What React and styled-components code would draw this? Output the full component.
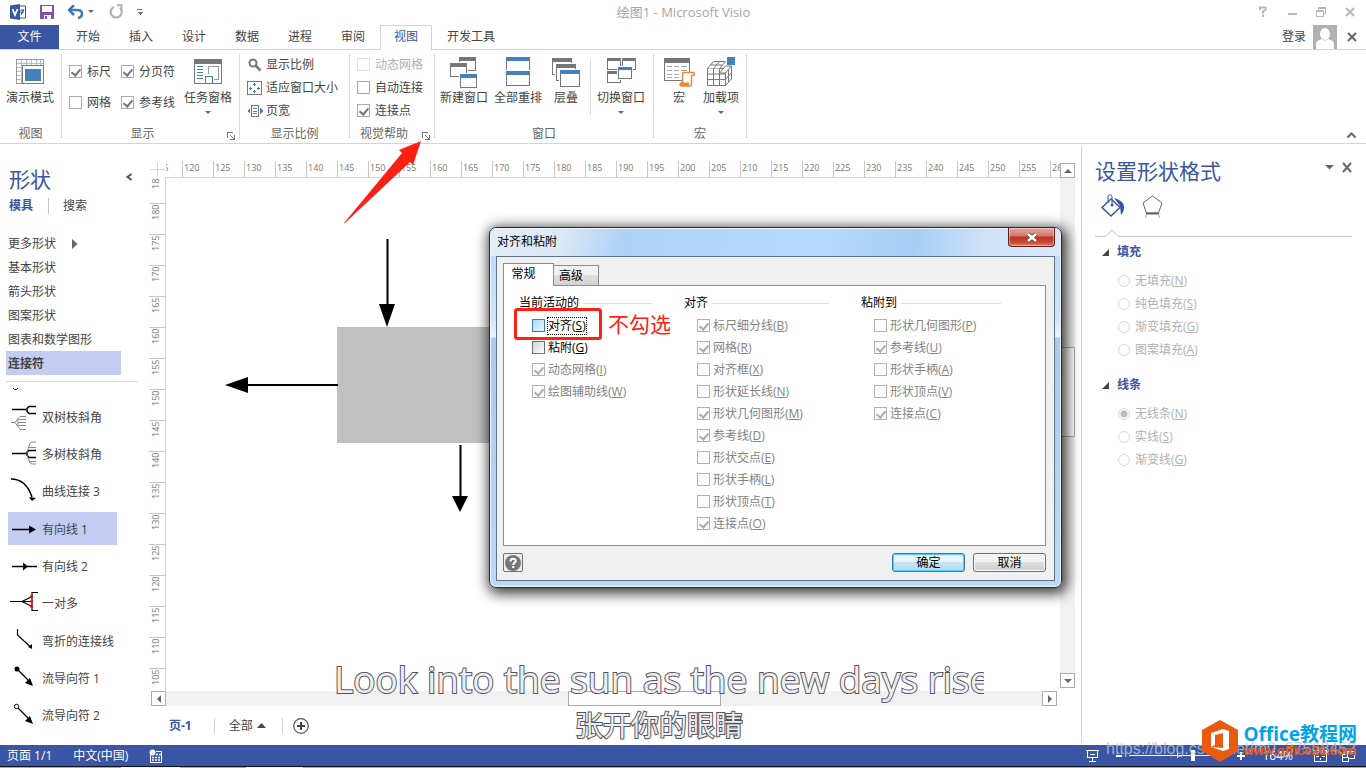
import React, { useState } from 'react';
import styled, { createGlobalStyle, css } from 'styled-components';

const GlobalStyle = createGlobalStyle`
  * {
    box-sizing: border-box;
  }
  body {
    margin: 0;
    overflow: hidden;
    background: #fff;
  }
  body, button, input {
    font-family: "Open Sans", "Noto Sans CJK SC", sans-serif;
    font-size: 12px;
    line-height: 16px;
    color: #444;
  }
  button {
    padding: 0;
    border: 0;
    background: none;
    white-space: nowrap;
  }
  svg {
    display: block;
    flex: none;
  }
`;

const Window = styled.div`
  position: relative;
  display: flex;
  flex-direction: column;
  height: 100vh;
  min-height: 640px;
  overflow: hidden;
`;

/* title bar */

const TitleBar = styled.header`
  display: grid;
  grid-template-columns: 1fr auto 1fr;
  align-items: center;
  height: 25px;
  padding: 0 8px 2px 9px;
`;

const QuickAccess = styled.div`
  display: flex;
  align-items: center;
`;

const IconButton = styled.button`
  display: flex;
  align-items: center;
  justify-content: center;
  width: ${(p) => p.$w || 16}px;
  height: ${(p) => p.$h || 16}px;
  margin-right: ${(p) => p.$gap || 0}px;
`;

const WindowTitle = styled.div`
  font-size: 13px;
  color: #a6a6a6;
  white-space: nowrap;
`;

const WindowButtons = styled.div`
  display: flex;
  justify-content: flex-end;
  gap: 13px;
`;

/* ribbon tabs */

const TabRow = styled.nav`
  display: flex;
  align-items: stretch;
  height: 25px;
  border-bottom: 1px solid #d4d4d4;
`;

const FileTab = styled.button`
  width: 59px;
  margin-right: 3px;
  color: #fff;
  background: #3955a3;
`;

const RibbonTab = styled.button`
  height: 25px;
  margin-right: 1px;
  padding: 0 13px 2px;
  border: 1px solid transparent;
  border-bottom: 0;
  ${(p) =>
    p.$active &&
    css`
      color: #3955a3;
      background: #fff;
      border-color: #d4d4d4;
    `}
`;

const Account = styled.div`
  display: flex;
  align-items: center;
  gap: 7px;
  margin-left: auto;
  padding-right: 6px;
`;

/* ribbon */

const RibbonBar = styled.div`
  display: flex;
  height: 94px;
  border-bottom: 1px solid #d4d4d4;
`;

const Group = styled.section`
  display: flex;
  flex-direction: column;
  padding-top: 3px;
`;

const GroupBody = styled.div`
  display: flex;
  flex: 1;
  gap: ${(p) => p.$gap || 0}px;
  padding: 0 ${(p) => p.$end || 0}px 0 ${(p) => p.$start || 0}px;
`;

const GroupFooter = styled.div`
  display: flex;
  height: 20px;
  line-height: 22px;
  color: #666;
  text-align: center;
`;

const GroupName = styled.span`
  flex: 1;
`;

const Launcher = styled.button`
  width: 16px;
  height: 20px;
  padding: 5px 4px 0;
`;

const GroupSeparator = styled.div`
  width: 1px;
  margin: ${(p) => (p.$inner ? '6px 0 8px' : '4px 0 5px')};
  background: #dcdcdc;
`;

const BigButton = styled.button`
  display: flex;
  flex-direction: column;
  align-items: center;
  min-width: 36px;
  padding-top: 3px;
  line-height: 20px;
`;

const Caret = styled.span`
  width: 0;
  margin-top: ${(p) => p.$top || 0}px;
  border: 3px solid transparent;
  border-top-color: #666;
  border-bottom: 0;
`;

const CheckGrid = styled.div`
  display: grid;
  grid-template-columns: 52px 57px;
  grid-auto-rows: 31px;
  padding-top: 3px;
`;

const RowStack = styled.div`
  display: grid;
  grid-auto-rows: 23px;
`;

const SmallButton = styled.button`
  display: flex;
  align-items: center;
  gap: 3px;
`;

const CheckLabel = styled.label`
  display: flex;
  align-items: center;
  gap: 5px;
  white-space: nowrap;
  color: ${(p) => (p.$off ? '#b1b1b1' : '#444')};
`;

const CheckBox = styled.input.attrs({ type: 'checkbox' })`
  appearance: none;
  flex: none;
  position: relative;
  width: 13px;
  height: 13px;
  margin: 0;
  border: 1px solid #ababab;
  background: #fff;
  &:disabled {
    border-color: #e1e1e1;
  }
  &:checked::after {
    content: "";
    position: absolute;
    left: 3px;
    top: 1px;
    width: 4px;
    height: 7px;
    border: solid #777;
    border-width: 0 2px 2px 0;
    transform: rotate(40deg);
  }
`;

const CollapseRibbon = styled.button`
  align-self: flex-end;
  margin: 0 9px 4px auto;
`;

/* work area */

const Body = styled.main`
  display: flex;
  flex: 1;
  min-height: 0;
`;

const ShapesPanel = styled.aside`
  display: flex;
  flex-direction: column;
  flex: none;
  width: 149px;
  padding-top: 22px;
`;

const PanelTitle = styled.h2`
  flex: 1;
  margin: 0;
  font-size: 21px;
  font-weight: 400;
  line-height: 26px;
  color: #3955a3;
`;

const ShapesHead = styled.div`
  display: flex;
  align-items: flex-start;
  padding: 0 16px 0 9px;
`;

const ShapesTabs = styled.div`
  display: flex;
  margin: 6px 0 17px 9px;
`;

const PanelTab = styled.button`
  padding-right: ${(p) => (p.$active ? 15 : 0)}px;
  margin-right: 14px;
  border-right: ${(p) => (p.$active ? '1px solid #c6c6c6' : '0')};
  font-weight: ${(p) => (p.$active ? 700 : 400)};
  color: ${(p) => (p.$active ? '#3955a3' : '#444')};
`;

const StencilList = styled.div`
  display: grid;
  grid-auto-rows: 24px;
  margin: 0 11px 0 6px;
  padding-bottom: 6px;
  border-bottom: 1px solid #dcdcdc;
`;

const Stencil = styled.button`
  display: flex;
  align-items: center;
  gap: 16px;
  width: 115px;
  padding: 2px 0 0 2px;
  font-weight: ${(p) => (p.$active ? 700 : 400)};
  background: ${(p) => (p.$active ? '#c2cdf1' : 'none')};
`;

const ShapeList = styled.div`
  display: grid;
  flex: 1;
  grid-template-rows: 16px;
  grid-auto-rows: 1fr;
  align-items: center;
  padding: 0 0 11px 8px;
`;

const ShapeItem = styled.button`
  display: flex;
  align-items: center;
  gap: 4px;
  width: 109px;
  height: 33px;
  padding-top: 2px;
  background: ${(p) => (p.$active ? '#c2cdf1' : 'none')};
`;

const Editor = styled.section`
  display: grid;
  flex: 1;
  min-width: 0;
  grid-template-columns: 17px 1fr 15px;
  grid-template-rows: 17px 1fr 15px 39px;
  padding: 17px 6px 0 0;
`;

const RulerCorner = styled.div`
  padding: 1px 0 0 1px;
`;

const TopRuler = styled.div`
  display: flex;
  overflow: hidden;
  border-bottom: 1px solid #d4d4d4;
`;

const SideRuler = styled.div`
  display: flex;
  flex-direction: column;
  overflow: hidden;
  border-right: 1px solid #d4d4d4;
`;

const RulerMark = styled.span`
  flex: none;
  font-size: 9px;
  line-height: 14px;
  color: #777;
  ${(p) =>
    p.$side
      ? css`
          width: 16px;
          height: 31px;
          padding-bottom: 1px;
          border-bottom: 1px solid #c6c6c6;
          writing-mode: vertical-rl;
          transform: rotate(180deg);
          text-align: right;
          &:first-child {
            margin-top: -6px;
          }
        `
      : css`
          width: 31px;
          padding-left: 1px;
          border-left: 1px solid #c6c6c6;
          &:first-child {
            margin-left: -15px;
          }
        `}
`;

const Page = styled.div`
  overflow: hidden;
  background: #fff;
`;

const ScrollBar = styled.div`
  display: flex;
  background: #f1f1f1;
  ${(p) =>
    p.$vertical
      ? css`
          grid-area: 1 / 3 / 3 / 4;
          flex-direction: column;
          margin: 2px 0 3px;
        `
      : css`
          grid-area: 3 / 1 / 4 / 4;
          margin: 0 18px 0 2px;
        `}
`;

const ScrollButton = styled.button`
  display: flex;
  flex: none;
  align-items: center;
  justify-content: center;
  width: 15px;
  height: 15px;
  border: 1px solid #ababab;
  background: #fff;
`;

const ScrollTrack = styled.div`
  display: flex;
  flex: 1;
  flex-direction: ${(p) => (p.$vertical ? 'column' : 'row')};
  &::before {
    content: "";
    flex: ${(p) => (p.$vertical ? 170 : 403)};
  }
  &::after {
    content: "";
    flex: ${(p) => (p.$vertical ? 237 : 322)};
  }
`;

const ScrollThumb = styled.div`
  flex: ${(p) => (p.$vertical ? 88 : 151)};
  border: 1px solid #ababab;
  background: #fff;
`;

const PageTabs = styled.div`
  grid-column: 1 / 4;
  display: flex;
  align-items: center;
  padding-left: 20px;
`;

const PageTab = styled.button`
  display: flex;
  align-items: center;
  gap: 4px;
  font-weight: ${(p) => (p.$active ? 700 : 400)};
  color: ${(p) => (p.$active ? '#3955a3' : '#444')};
`;

const PageDivider = styled.span`
  width: 1px;
  height: 16px;
  margin: 0 ${(p) => p.$right || 14}px 0 ${(p) => p.$left || 16}px;
  background: #d4d4d4;
`;

/* format pane */

const FormatPanel = styled.aside`
  flex: none;
  width: 285px;
  margin: 2px 0;
  padding: 12px 14px 0 13px;
  border-left: 1px solid #d4d4d4;
`;

const FormatHead = styled.div`
  display: flex;
  align-items: center;
  gap: 8px;
`;

const FormatTabs = styled.div`
  display: flex;
  gap: 16px;
  height: 45px;
  padding: 9px 5px 0;
`;

const PaneRule = styled.div`
  display: flex;
  height: 8px;
  margin-bottom: 6px;
  &::after {
    content: "";
    flex: 1;
    border-bottom: 1px solid #c6c6c6;
  }
`;

const Section = styled.fieldset`
  margin: 0 0 15px;
  padding: 0;
  border: 0;
`;

const SectionTitle = styled.legend`
  display: flex;
  align-items: center;
  gap: 8px;
  margin-bottom: 9px;
  padding: 1px 0 0 7px;
  font-weight: 700;
  color: #3955a3;
`;

const RadioLabel = styled.label`
  display: flex;
  align-items: center;
  gap: 5px;
  height: 23px;
  padding-left: 23px;
  color: #b1b1b1;
`;

const Radio = styled.input.attrs({ type: 'radio' })`
  appearance: none;
  width: 12px;
  height: 12px;
  margin: 0;
  border: 1px solid #d9d9d9;
  border-radius: 50%;
  background: #fdfdfd;
  &:checked {
    background: radial-gradient(circle, #bbb 3px, #fdfdfd 4px);
  }
`;

/* status bar */

const StatusBar = styled.footer`
  display: flex;
  flex: none;
  align-items: center;
  height: 21px;
  padding: 0 11px 0 7px;
  color: #fff;
  background: #3955a3;
`;

const StatusItem = styled.span`
  margin-right: ${(p) => p.$gap || 21}px;
`;

const StatusRight = styled.div`
  display: flex;
  align-items: center;
  margin-left: auto;
`;

const ZoomLevel = styled.button`
  margin: 0 21px 0 17px;
  color: #fff;
`;

const ZoomSlider = styled.input.attrs({ type: 'range' })`
  appearance: none;
  width: 100px;
  height: 12px;
  margin: 0 8px 0 7px;
  background:
    linear-gradient(#fff, #fff) 48px center / 1px 5px no-repeat,
    linear-gradient(#fff, #fff) center / 100% 1px no-repeat;
  &::-webkit-slider-thumb {
    appearance: none;
    width: 4px;
    height: 11px;
    background: #fff;
  }
`;

const TaskStrip = styled.div`
  flex: none;
  height: 2px;
  border-top: 1px solid #111;
  background: linear-gradient(90deg, #a7a8bd 121px, #f3eef5 121px, #f3eef5 180px, #a7a8bd 180px, #a7a8bd 246px, #f3eef5 246px, #f3eef5 303px, #a7a8bd 303px);
`;

/* dialog */

const Dialog = styled.section`
  position: absolute;
  left: 489px;
  top: 227px;
  width: 573px;
  padding: 0 6px 6px;
  border: 1px solid #1d2733;
  border-radius: 7px;
  color: #000;
  background: linear-gradient(180deg, #e3effb 0, #bcdcfc 28px, #cfe4fa 90px, #eaf4fd 109px, #a9cbee 110px, #b9dafa 100%);
  box-shadow: inset 0 0 0 1px #f2f8fe, 2px 3px 13px 3px rgba(0, 0, 0, 0.75);
`;

const DialogTitle = styled.div`
  display: flex;
  align-items: flex-start;
  justify-content: space-between;
  height: 28px;
  margin: 0 -5px;
  padding: 0 5px 0 6px;
  border-radius: 6px 6px 0 0;
  line-height: 27px;
  background: linear-gradient(100deg, #e2edf8 0, #dbe9f7 70px, #b0d2f6 130px, #b6d9fd 330px, #a7cdf5 420px, #cfe3f9 490px, #d9e8f9 100%);
  box-shadow: inset 0 1px 0 #f2f8fe;
`;

const DialogClose = styled.button`
  display: flex;
  align-items: center;
  justify-content: center;
  width: 47px;
  height: 19px;
  border: 1px solid #5c1f19;
  border-top: 0;
  border-radius: 0 0 4px 4px;
  background: linear-gradient(#e5a399 0, #d3786b 8px, #b83522 9px, #c8452f 14px, #d9836c 100%);
  box-shadow: inset 0 0 0 1px rgba(255, 255, 255, 0.4);
`;

const DialogBody = styled.div`
  padding: 6px 8px 8px 6px;
  border: 1px solid #5f7389;
  background: #f0f0f0;
`;

const DialogTabs = styled.div`
  display: flex;
  align-items: flex-end;
`;

const DialogTab = styled.button`
  position: relative;
  border: 1px solid #898c95;
  border-bottom: 0;
  color: #000;
  ${(p) =>
    p.$active
      ? css`
          z-index: 1;
          height: 23px;
          width: 51px;
          margin-bottom: -1px;
          padding: 0 10px 2px 0;
          background: #fff;
        `
      : css`
          height: 20px;
          width: 45px;
          padding-right: 10px;
          border-left: 0;
          background: linear-gradient(#f2f2f2 50%, #dedede 50%, #d2d2d2);
        `}
`;

const DialogPanel = styled.div`
  display: grid;
  grid-template-columns: 133px 145px 140px;
  gap: 32px;
  align-items: start;
  padding: 9px 15px 10px;
  border: 1px solid #898c95;
  background: #fff;
`;

const OptionGroup = styled.fieldset`
  display: grid;
  grid-auto-rows: 22px;
  min-width: 0;
  margin: 0;
  padding: 0 0 0 13px;
  border: 0;
`;

const OptionLegend = styled.legend`
  display: flex;
  align-items: center;
  gap: 4px;
  width: calc(100% + 13px);
  margin: 0 0 4px -13px;
  padding: 0;
  &::after {
    content: "";
    flex: 1;
    height: 1px;
    background: #dcdfe4;
  }
`;

const OptionLabel = styled.label`
  display: flex;
  align-items: center;
  gap: 3px;
  white-space: nowrap;
  color: ${(p) => (p.$off ? '#838383' : '#000')};
`;

const OptionText = styled.span`
  outline: ${(p) => (p.$focus ? '1px dotted #000' : '0')};
`;

const OptionCheck = styled(CheckBox)`
  margin-bottom: 2px;
  border-color: #707070;
  background: linear-gradient(135deg, #cfd3d8, #fff);
  ${(p) =>
    p.$hot &&
    css`
      border-color: #3c7fb1;
      background: linear-gradient(135deg, #a9dbf7, #eaf7fe);
    `}
  &:disabled {
    border-color: #b1b1b1;
    background: #fbfbfb;
  }
  &:disabled:checked::after {
    border-color: #adadad;
  }
`;

const DialogFooter = styled.div`
  display: flex;
  align-items: center;
  gap: 8px;
  padding-top: 7px;
`;

const HelpButton = styled.button`
  display: flex;
  align-items: center;
  justify-content: center;
  width: 20px;
  height: 19px;
  margin: 0 auto 0 0;
  border: 1px solid #707070;
  border-radius: 2px;
`;

const PushButton = styled.button`
  width: 73px;
  height: 19px;
  border: 1px solid ${(p) => (p.$primary ? '#2c7fb5' : '#707070')};
  border-radius: 3px;
  color: #000;
  background: ${(p) =>
    p.$primary
      ? 'linear-gradient(#eaf5fb 50%, #c6e3f2 50%, #b9dcee)'
      : 'linear-gradient(#f2f2f2 50%, #dddddd 50%, #cfcfcf)'};
  box-shadow: inset 0 0 0 1px ${(p) => (p.$primary ? '#45d3fb' : '#fbfbfb')};
`;

/* annotations and watermarks over the window */

const Markup = styled.svg`
  position: absolute;
  left: 0;
  top: 0;
  pointer-events: none;
`;

const MarkupText = styled.span`
  position: absolute;
  left: 608px;
  top: 310px;
  font-size: 21px;
  line-height: 28px;
  color: #ff2014;
`;

const Lyrics = styled.div`
  position: absolute;
  left: 334px;
  bottom: 22px;
  width: 650px;
  overflow: hidden;
  white-space: nowrap;
  color: #ededf3;
  -webkit-text-stroke: 2px #55555c;
  paint-order: stroke fill;
`;

const LyricLine = styled.div`
  font-size: ${(p) => (p.$small ? 28 : 37)}px;
  line-height: ${(p) => (p.$small ? 42 : 50)}px;
  text-align: ${(p) => (p.$small ? 'center' : 'left')};
`;

const BlogMark = styled.div`
  position: absolute;
  right: 10px;
  bottom: 9px;
  font-family: "Liberation Sans", sans-serif;
  font-size: 16px;
  line-height: 20px;
  color: rgba(190, 196, 214, 0.8);
`;

const SiteMark = styled.div`
  position: absolute;
  right: 9px;
  bottom: 5px;
  display: flex;
  align-items: center;
  gap: 4px;
`;

const SiteName = styled.div`
  font-weight: 700;
  font-size: 19px;
  line-height: 20px;
  color: #00a4ea;
`;

const SiteUrl = styled.div`
  font-family: "Liberation Sans", sans-serif;
  font-weight: 700;
  font-size: 13px;
  line-height: 14px;
  color: #eb5a12;
`;

const Mnemonic = ({ text }) => {
  const match = text.match(/^(.*)\((\w)\)$/);
  if (!match) return text;
  return (
    <>
      {match[1]}(<u>{match[2]}</u>)
    </>
  );
};

const Icon = ({ w = 32, h = 32, smooth, children }) => (
  <svg width={w} height={h} fill="none" shapeRendering={smooth ? 'auto' : 'crispEdges'} aria-hidden="true">
    {children}
  </svg>
);

/* a small window drawn with a filled caption, x/y is the outer corner */
const Win = ({ x, y, w, h, color = '#777', line = color, bar = 4 }) => (
  <>
    <rect x={x - 1} y={y - 1} width={w + 2} height={h + 2} fill="#fff" />
    <rect x={x + 0.5} y={y + 0.5} width={w - 1} height={h - 1} stroke={line} fill="#fff" />
    <rect x={x} y={y} width={w} height={bar} fill={color} />
  </>
);

const BLUE = '#4480bb';

const PresentIcon = () => (
  <Icon>
    <rect x="2.5" y="3.5" width="27" height="24" stroke="#9a9a9a" fill="#fff" />
    <path d="M3 7.5h26M3 11.5h7M3 15.5h7M3 19.5h7M3 23.5h7M7.5 4v23M12.5 4v5M17.5 4v5M22.5 4v5M26.5 4v5" stroke="#9cc3e6" />
    <rect x="8.5" y="9.5" width="21" height="18" stroke="#777" fill="#fff" />
    <rect x="11" y="13" width="16" height="12" fill={BLUE} />
  </Icon>
);

const TaskPaneIcon = () => (
  <Icon>
    <Win x={2} y={3} w={28} h={25} bar={5} />
    <path d="M5 10.5h6M5 13.5h6M5 16.5h6M5 19.5h6M5 22.5h6" stroke={BLUE} />
    <path d="M16.5 18V10.5h10v13h-5" stroke="#9a9a9a" />
    <path d="M13.5 27V20.5h7V27" stroke={BLUE} />
  </Icon>
);

const NewWindowIcon = () => (
  <Icon>
    <Win x={11} y={1} w={17} h={14} />
    <Win x={2} y={7} w={17} h={14} />
    <Win x={12} y={18} w={17} h={14} color={BLUE} line="#777" />
  </Icon>
);

const ArrangeIcon = () => (
  <Icon>
    <Win x={4} y={1} w={24} h={15} color={BLUE} line="#777" />
    <Win x={4} y={15} w={24} h={15} color={BLUE} line="#777" />
  </Icon>
);

const CascadeIcon = () => (
  <Icon>
    <Win x={2} y={2} w={20} h={17} />
    <Win x={6} y={8} w={20} h={17} />
    <Win x={10} y={14} w={20} h={17} color={BLUE} line="#777" />
  </Icon>
);

const SwitchIcon = () => (
  <Icon>
    <Win x={2} y={2} w={14} h={12} bar={3} />
    <Win x={17} y={2} w={14} h={12} bar={3} />
    <Win x={2} y={15} w={14} h={12} bar={3} />
    <Win x={13} y={11} w={14} h={12} color={BLUE} line="#777" bar={3} />
  </Icon>
);

const MacroIcon = () => (
  <Icon smooth>
    <Win x={1} y={2} w={26} h={23} bar={5} />
    <path d="M4 10.5h5M11 10.5h5M18 10.5h6M4 14.5h5M11 14.5h5M18 14.5h6M4 18.5h5M11 18.5h5M4 21.5h5M11 21.5h5" stroke="#aaa" />
    <path d="M20.5 16.500h10c1 0 1 3 0 3h-2v8c0 2-1 2.500-2 2.500h-8c-2 0-2-3 0-3h1v-8c0-1.500 0-2.500 1-2.500z" fill="#fff" stroke="#e8883a" strokeWidth="1.5" />
    <path d="M18 26.5h8v3.500h-8c-1.500-.5-1.500-3 0-3.500z" fill="#e8883a" />
  </Icon>
);

const AddInIcon = () => (
  <Icon smooth>
    <path d="M2.500 12.500h18v17h-18zM2.500 18h18M2.500 23.500h18M8.500 12.500v17M14.500 12.500v17" stroke="#777" fill="#fff" />
    <path d="M2.500 12.500L8.500 5.500h12l-6 7M8.500 12.500l6-7M5.500 9h12M20.500 29.500l6-6.500V10h-6l-6 7h6zM20.500 17l6-7M20.500 23.500l6-7M23.500 13.500v12.500" stroke="#777" fill="#fff" />
    <rect x="22" y="1" width="8" height="8" fill={BLUE} />
  </Icon>
);

const Cross = ({ size = 9, color = '#777' }) => (
  <Icon w={size + 1} h={size + 1} smooth>
    <path d={`M1 1l${size - 1} ${size - 1}M${size} 1l-${size - 1} ${size - 1}`} stroke={color} strokeWidth="2" />
  </Icon>
);

const stencils = ['更多形状', '基本形状', '箭头形状', '图案形状', '图表和数学图形', '连接符'];

const shapes = [
  {
    name: '双树枝斜角',
    icon: (
      <>
        <path d="M4 8.5h14M28 5.5h-7l-2 2v3l2 2h7" stroke="#000" strokeWidth="1.5" />
        <path d="M3 21.5h4l3-4 2-2h6M7 21.5l3 4 2 3h6M10 17.5v8M11 18.5h7M10 21.5h8M11 24.5h7" stroke="#888" />
      </>
    ),
  },
  {
    name: '多树枝斜角',
    icon: (
      <>
        <path d="M4 15.5h14M28 12.5h-7l-2 1.5v3l2 2.5h7" stroke="#000" strokeWidth="1.5" />
        <path d="M19 14l3-9 2-1h4M21 9.5h7M19 17l3 8 2 1h4M21 23.5h7" stroke="#888" />
      </>
    ),
  },
  {
    name: '曲线连接 3',
    icon: (
      <>
        <path d="M3 3C15 3 21 12 24 21" stroke="#000" strokeWidth="1.5" />
        <path d="M21 21l7 1-4 3z" fill="#000" />
      </>
    ),
  },
  {
    name: '有向线 1',
    icon: (
      <>
        <path d="M4 16.5h20" stroke="#000" strokeWidth="1.5" />
        <path d="M21 12.5l7 4-7 4z" fill="#000" />
      </>
    ),
  },
  {
    name: '有向线 2',
    icon: (
      <>
        <path d="M4 16.5h25" stroke="#000" strokeWidth="1.5" />
        <path d="M15 12.5l5 4-5 4z" fill="#000" />
      </>
    ),
  },
  {
    name: '一对多',
    icon: (
      <>
        <path d="M2 13.5h22M14 13.5l10-5M14 13.5l10 5M30 4.5h-6v18h6" stroke="#000" strokeWidth="1.2" />
        <path d="M22 8.500h3M22 13.500h3M22 18.500h3" stroke="#f00" strokeWidth="2" />
      </>
    ),
  },
  {
    name: '弯折的连接线',
    icon: (
      <>
        <path d="M9.5 4v6l13 12" stroke="#000" strokeWidth="1.2" />
        <path d="M20 22l4-3v5z" fill="#000" />
      </>
    ),
  },
  {
    name: '流导向符 1',
    icon: (
      <>
        <circle cx="9" cy="7" r="2.5" fill="#000" />
        <path d="M9 7l14 14" stroke="#000" strokeWidth="1.2" />
        <path d="M17 21l5-5 3 8z" fill="#000" />
      </>
    ),
  },
  {
    name: '流导向符 2',
    icon: (
      <>
        <path d="M9 7l14 14" stroke="#000" strokeWidth="1.2" />
        <circle cx="8.5" cy="6.5" r="2.2" fill="#fff" stroke="#000" />
        <path d="M17 21l5-5 3 8z" fill="#000" />
      </>
    ),
  },
];

const optionGroups = [
  {
    title: '当前活动的',
    options: [
      { label: '对齐(S)', enabled: true, hot: true },
      { label: '粘附(G)', enabled: true },
      { label: '动态网格(I)', checked: true },
      { label: '绘图辅助线(W)', checked: true },
    ],
  },
  {
    title: '对齐',
    options: [
      { label: '标尺细分线(B)', checked: true },
      { label: '网格(R)', checked: true },
      { label: '对齐框(X)' },
      { label: '形状延长线(N)' },
      { label: '形状几何图形(M)', checked: true },
      { label: '参考线(D)', checked: true },
      { label: '形状交点(E)' },
      { label: '形状手柄(L)' },
      { label: '形状顶点(T)' },
      { label: '连接点(O)', checked: true },
    ],
  },
  {
    title: '粘附到',
    options: [
      { label: '形状几何图形(P)' },
      { label: '参考线(U)', checked: true },
      { label: '形状手柄(A)' },
      { label: '形状顶点(V)' },
      { label: '连接点(C)', checked: true },
    ],
  },
];

const formatSections = [
  { title: '填充', name: 'fill', options: ['无填充(N)', '纯色填充(S)', '渐变填充(G)', '图案填充(A)'], selected: -1 },
  { title: '线条', name: 'line', options: ['无线条(N)', '实线(S)', '渐变线(G)'], selected: 0 },
];

const topMarks = Array.from({ length: 30 }, (_, i) => 115 + i * 5);
const sideMarks = Array.from({ length: 17 }, (_, i) => 185 - i * 5);

const RibbonCheck = ({ label, checked, disabled }) => (
  <CheckLabel $off={disabled}>
    <CheckBox defaultChecked={checked} disabled={disabled} />
    {label}
  </CheckLabel>
);

const RibbonButton = ({ icon, label, menu }) => (
  <BigButton>
    {icon}
    {label}
    {menu && <Caret $top={3} />}
  </BigButton>
);

const RibbonGroup = ({ name, launcher, gap, start, end, children }) => (
  <>
    <Group>
      <GroupBody $gap={gap} $start={start} $end={end}>
        {children}
      </GroupBody>
      <GroupFooter>
        <GroupName>{name}</GroupName>
        {launcher && (
          <Launcher aria-label={name}>
            <Icon w={8} h={8}>
              <path d="M.5 6V.5H6M3 3l4 4M7.5 3v4.500H3" stroke="#777" />
            </Icon>
          </Launcher>
        )}
      </GroupFooter>
    </Group>
    <GroupSeparator />
  </>
);

const TopBar = () => (
  <TitleBar>
    <QuickAccess>
      <IconButton $w={18} $gap={12} aria-label="Visio">
        <svg width="18" height="18" fill="none" aria-hidden="true">
          <path d="M9 3h7.500v12H9" fill="#fff" stroke="#3955a3" />
          <path d="M1 2.500L11 1v16L1 15.500z" fill="#3955a3" />
          <path d="M3.500 6l2.500 6L8.500 6" stroke="#fff" strokeWidth="1.8" />
          <path d="M12 12l3-6M12 7h2v3h-2z" stroke="#3955a3" />
        </svg>
      </IconButton>
      <IconButton $gap={13} aria-label="保存">
        <svg width="14" height="14" aria-hidden="true">
          <path d="M0 0h14v14H0z" fill="#8250a8" />
          <path d="M2 1h10v6H2zM4 10h7v4H4z" fill="#fff" />
          <path d="M5 11h2v3H5z" fill="#8250a8" />
        </svg>
      </IconButton>
      <IconButton $gap={4} aria-label="撤消">
        <svg width="16" height="14" fill="none" aria-hidden="true">
          <path d="M2 5h7c7 0 6 7 1 8" stroke="#3e78b5" strokeWidth="2.5" />
          <path d="M6 0L1 5l5 5" stroke="#3e78b5" strokeWidth="2.5" />
        </svg>
      </IconButton>
      <IconButton $w={6} $gap={14} aria-label="撤消列表">
        <Caret />
      </IconButton>
      <IconButton $gap={13} aria-label="重复">
        <svg width="15" height="15" fill="none" aria-hidden="true">
          <path d="M5 3a5.500 5.500 0 1 0 6 1" stroke="#b1b1b1" strokeWidth="2.2" />
          <path d="M8 1.200h4.500v5" stroke="#b1b1b1" strokeWidth="2" />
        </svg>
      </IconButton>
      <IconButton $w={6} aria-label="自定义">
        <Icon w={6} h={8}>
          <path d="M0 1.5h5" stroke="#777" />
          <path d="M0 4h6L3 7z" fill="#777" />
        </Icon>
      </IconButton>
    </QuickAccess>
    <WindowTitle>绘图1 - Microsoft Visio</WindowTitle>
    <WindowButtons>
      <IconButton aria-label="帮助">
        <svg width="8" height="11" fill="none" aria-hidden="true">
          <path d="M1 4V1.500h5.500V4L4 5.500v2M4 8.500V11" stroke="#b8b8b8" strokeWidth="2" />
        </svg>
      </IconButton>
      <IconButton aria-label="最小化">
        <Icon w={9} h={10}>
          <path d="M0 7h9" stroke="#b8b8b8" strokeWidth="2" />
        </Icon>
      </IconButton>
      <IconButton aria-label="还原">
        <Icon w={10} h={10}>
          <path d="M2.500 3V.5h7V6H8M.5 3.500h7v6h-7zM0 4.500h8M2 1.500h8" stroke="#b8b8b8" />
        </Icon>
      </IconButton>
      <IconButton aria-label="关闭">
        <Cross color="#b8b8b8" />
      </IconButton>
    </WindowButtons>
  </TitleBar>
);

const Tabs = () => {
  const [active, setActive] = useState('视图');
  return (
    <TabRow>
      <FileTab>文件</FileTab>
      {['开始', '插入', '设计', '数据', '进程', '审阅', '视图', '开发工具'].map((tab) => (
        <RibbonTab key={tab} $active={tab === active} onClick={() => setActive(tab)}>
          {tab}
        </RibbonTab>
      ))}
      <Account>
        <button>登录</button>
        <svg width="24" height="24" aria-hidden="true">
          <path d="M0 0h24v24H0z" fill="#b1b1b1" />
          <ellipse cx="12" cy="9" rx="5" ry="6" fill="#fff" />
          <path d="M3 24v-4c0-5 4-5 6-6 2 2 4 2 6 0 2 1 6 1 6 6v4z" fill="#fff" />
        </svg>
        <IconButton aria-label="关闭绘图">
          <Cross color="#666" />
        </IconButton>
      </Account>
    </TabRow>
  );
};

const Ribbon = () => (
  <RibbonBar>
    <RibbonGroup name="视图" start={6} end={7}>
      <RibbonButton icon={<PresentIcon />} label="演示模式" />
    </RibbonGroup>
    <RibbonGroup name="显示" launcher start={7} end={7}>
      <CheckGrid>
        <RibbonCheck label="标尺" checked />
        <RibbonCheck label="分页符" checked />
        <RibbonCheck label="网格" />
        <RibbonCheck label="参考线" checked />
      </CheckGrid>
      <GroupBody $start={6}>
        <RibbonButton icon={<TaskPaneIcon />} label="任务窗格" menu />
      </GroupBody>
    </RibbonGroup>
    <RibbonGroup name="显示比例" start={7} end={11}>
      <RowStack>
        <SmallButton>
          <Icon w={16} h={16} smooth>
            <circle cx="6" cy="6" r="3.5" stroke="#777" strokeWidth="2" />
            <path d="M8.5 8.5l5 5" stroke="#777" strokeWidth="2.5" />
          </Icon>
          显示比例
        </SmallButton>
        <SmallButton>
          <Icon w={16} h={16}>
            <rect x=".5" y="1.5" width="14" height="13" stroke="#777" />
            <path d="M7.5 3v3M7.5 10v3M2 8h3M10 8h3M6 4.5h3M6 11.5h3M3.5 6.5v3M11.5 6.5v3" stroke={BLUE} />
          </Icon>
          适应窗口大小
        </SmallButton>
        <SmallButton>
          <Icon w={16} h={16}>
            <rect x="4.5" y="2.5" width="7" height="11" stroke="#777" />
            <path d="M6 5.5h4M6 8h4M6 10.5h4" stroke="#777" />
            <path d="M3 5v6L0 8zM13 5v6l3-3z" fill={BLUE} />
          </Icon>
          页宽
        </SmallButton>
      </RowStack>
    </RibbonGroup>
    <RibbonGroup name="视觉帮助" launcher start={7} end={11}>
      <RowStack>
        <RibbonCheck label="动态网格" disabled />
        <RibbonCheck label="自动连接" />
        <RibbonCheck label="连接点" checked />
      </RowStack>
    </RibbonGroup>
    <RibbonGroup name="窗口" start={5} end={8} gap={6}>
      <RibbonButton icon={<NewWindowIcon />} label="新建窗口" />
      <RibbonButton icon={<ArrangeIcon />} label="全部重排" />
      <RibbonButton icon={<CascadeIcon />} label="层叠" />
      <GroupSeparator $inner />
      <RibbonButton icon={<SwitchIcon />} label="切换窗口" menu />
    </RibbonGroup>
    <RibbonGroup name="宏" start={7} end={7} gap={6}>
      <RibbonButton icon={<MacroIcon />} label="宏" />
      <RibbonButton icon={<AddInIcon />} label="加载项" menu />
    </RibbonGroup>
    <CollapseRibbon aria-label="折叠功能区">
      <Icon w={11} h={8} smooth>
        <path d="M1.5 6.5l4-4 4 4" stroke="#666" strokeWidth="2" />
      </Icon>
    </CollapseRibbon>
  </RibbonBar>
);

const Shapes = () => {
  const [shape, setShape] = useState('有向线 1');
  return (
    <ShapesPanel>
      <ShapesHead>
        <PanelTitle>形状</PanelTitle>
        <IconButton $w={8} $h={22} aria-label="最小化形状窗口">
          <Icon w={8} h={8} smooth>
            <path d="M6.5 1l-4 3 4 3" stroke="#555" strokeWidth="2" />
          </Icon>
        </IconButton>
      </ShapesHead>
      <ShapesTabs>
        <PanelTab $active>模具</PanelTab>
        <PanelTab>搜索</PanelTab>
      </ShapesTabs>
      <StencilList>
        {stencils.map((name, i) => (
          <Stencil key={name} $active={name === '连接符'}>
            {name}
            {i === 0 && (
              <Icon w={6} h={10} smooth>
                <path d="M0 0l5.500 5L0 10z" fill="#666" />
              </Icon>
            )}
          </Stencil>
        ))}
      </StencilList>
      <ShapeList>
        <Icon w={30} h={16} smooth>
          <path d="M5 6l1.500 1.500h2L10 6" stroke="#000" />
        </Icon>
        {shapes.map((s) => (
          <ShapeItem key={s.name} $active={s.name === shape} onClick={() => setShape(s.name)}>
            <Icon w={30} h={33} smooth>
              {s.icon}
            </Icon>
            {s.name}
          </ShapeItem>
        ))}
      </ShapeList>
    </ShapesPanel>
  );
};

const scrollPaths = {
  up: 'M0 6l4-4 4 4z',
  down: 'M0 2l4 4 4-4z',
  left: 'M6 0L2 4l4 4z',
  right: 'M2 0l4 4-4 4z',
};

const Scroll = ({ vertical, from, to }) => (
  <ScrollBar $vertical={vertical}>
    <ScrollButton aria-label={from}>
      <Icon w={8} h={8} smooth>
        <path d={scrollPaths[from]} fill="#666" />
      </Icon>
    </ScrollButton>
    <ScrollTrack $vertical={vertical}>
      <ScrollThumb $vertical={vertical} />
    </ScrollTrack>
    <ScrollButton aria-label={to}>
      <Icon w={8} h={8} smooth>
        <path d={scrollPaths[to]} fill="#666" />
      </Icon>
    </ScrollButton>
  </ScrollBar>
);

const DrawingArea = () => (
  <Editor>
    <RulerCorner>
      <Icon w={15} h={15}>
        <path d="M0 7.5h15M7.5 0v15" stroke="#ccd5f5" />
      </Icon>
    </RulerCorner>
    <TopRuler>
      {topMarks.map((mark) => (
        <RulerMark key={mark}>{mark}</RulerMark>
      ))}
    </TopRuler>
    <SideRuler>
      {sideMarks.map((mark) => (
        <RulerMark key={mark} $side>
          {mark}
        </RulerMark>
      ))}
    </SideRuler>
    <Page>
      <svg width="895" height="512" aria-hidden="true">
        <rect x="171" y="149" width="300" height="116" fill="#c0c0c0" />
        <path d="M221.500 61v70M172 207H77M294.500 267v55" stroke="#000" strokeWidth="2" fill="none" />
        <path d="M213 126h16l-8 23zM59 207l23-8v16zM286 318h16l-8 16z" />
      </svg>
    </Page>
    <Scroll vertical from="up" to="down" />
    <Scroll from="left" to="right" />
    <PageTabs>
      <PageTab $active>页-1</PageTab>
      <PageDivider $left={22} />
      <PageTab>
        全部
        <Icon w={9} h={5} smooth>
          <path d="M0 5l4.500-5L9 5z" fill="#444" />
        </Icon>
      </PageTab>
      <PageDivider $right={10} />
      <IconButton aria-label="插入页">
        <Icon w={16} h={16} smooth>
          <circle cx="8" cy="8" r="7.3" stroke="#555" strokeWidth="1.2" />
          <path d="M8 4v8M4 8h8" stroke="#444" strokeWidth="2" />
        </Icon>
      </IconButton>
    </PageTabs>
  </Editor>
);

const FormatPane = () => (
  <FormatPanel>
    <FormatHead>
      <PanelTitle>设置形状格式</PanelTitle>
      <button aria-label="任务窗格选项">
        <Icon w={9} h={18} smooth>
          <path d="M0 3h9L4.500 7.500z" fill="#666" />
        </Icon>
      </button>
      <button aria-label="关闭窗格">
        <Icon w={10} h={18} smooth>
          <path d="M1 1l8 9M9 1l-8 9" stroke="#666" strokeWidth="2" />
        </Icon>
      </button>
    </FormatHead>
    <FormatTabs>
      <svg width="26" height="26" fill="none" aria-hidden="true">
        <path d="M2 14.500L11 6l9 8.500-9 8.500z" stroke="#3955a3" strokeWidth="1.5" />
        <path d="M8 10V4c0-3 4-3 4 0v7" stroke="#3955a3" />
        <circle cx="12" cy="12" r="1.5" fill="#3955a3" />
        <path d="M14 5c7 2 10 5 10 9 0 3-1 6-3 8l-1-9z" fill="#3955a3" />
      </svg>
      <svg width="22" height="26" fill="none" aria-hidden="true">
        <path d="M10.500 3L20 10l-3.500 10h-12L1 10z" stroke="#666" />
        <path d="M4 20.500h13" stroke="#666" strokeWidth="2" />
        <path d="M4.500 21l-1 4M16.500 21l1 4" stroke="#aaa" />
      </svg>
    </FormatTabs>
    <PaneRule>
      <Icon w={24} h={8} smooth>
        <path d="M0 7.500h11l6-6.500 6 6.500h1" stroke="#c6c6c6" />
      </Icon>
    </PaneRule>
    {formatSections.map((section) => (
      <Section key={section.title}>
        <SectionTitle>
          <Icon w={7} h={7} smooth>
            <path d="M7 0v7H0z" fill="#444" />
          </Icon>
          {section.title}
        </SectionTitle>
        {section.options.map((option, i) => (
          <RadioLabel key={option}>
            <Radio name={section.name} disabled defaultChecked={i === section.selected} />
            <span>
              <Mnemonic text={option} />
            </span>
          </RadioLabel>
        ))}
      </Section>
    ))}
  </FormatPanel>
);

const SnapDialog = () => (
  <Dialog role="dialog" aria-label="对齐和粘附">
    <DialogTitle>
      对齐和粘附
      <DialogClose aria-label="关闭">
        <svg width="12" height="11" fill="none" aria-hidden="true">
          <path d="M2 2l8 7M10 2L2 9" stroke="#5b4a4a" strokeWidth="4" />
          <path d="M2 2l8 7M10 2L2 9" stroke="#fff" strokeWidth="2.4" />
        </svg>
      </DialogClose>
    </DialogTitle>
    <DialogBody>
      <DialogTabs>
        <DialogTab $active>常规</DialogTab>
        <DialogTab>高级</DialogTab>
      </DialogTabs>
      <DialogPanel>
        {optionGroups.map((group) => (
          <OptionGroup key={group.title}>
            <OptionLegend>{group.title}</OptionLegend>
            {group.options.map((option) => (
              <OptionLabel key={option.label} $off={!option.enabled}>
                <OptionCheck defaultChecked={option.checked} disabled={!option.enabled} $hot={option.hot} />
                <OptionText $focus={option.hot}>
                  <Mnemonic text={option.label} />
                </OptionText>
              </OptionLabel>
            ))}
          </OptionGroup>
        ))}
      </DialogPanel>
      <DialogFooter>
        <HelpButton aria-label="帮助">
          <svg width="16" height="16" fill="none" aria-hidden="true">
            <circle cx="8" cy="8" r="8" fill="#777" />
            <path d="M5.500 6.500c0-4 5.500-3.500 5.200-.5-.2 1.500-2.500 1.700-2.500 4M8.200 11v2" stroke="#fff" strokeWidth="2" />
          </svg>
        </HelpButton>
        <PushButton $primary>确定</PushButton>
        <PushButton>取消</PushButton>
      </DialogFooter>
    </DialogBody>
  </Dialog>
);

const Status = () => (
  <StatusBar>
    <StatusItem>页面 1/1</StatusItem>
    <StatusItem>中文(中国)</StatusItem>
    <Icon w={14} h={14} smooth>
      <path d="M1.5 6v7.500h11v-11H7" stroke="#fff" />
      <circle cx="3.5" cy="3.5" r="3" fill="#fff" />
      <path d="M7 5.500h5M3 8.500h9M3 11h9" stroke="#fff" strokeWidth="1.5" strokeDasharray="2 1" />
    </Icon>
    <StatusRight>
      <Icon w={30} h={14}>
        <path d="M0 1.5h13M1.5 2v6.500h10V2M6.5 9v4M3 12.500h7M4 5h5" stroke="#fff" />
      </Icon>
      <Icon w={6} h={12}>
        <path d="M0 6h6" stroke="#fff" strokeWidth="2" />
      </Icon>
      <ZoomSlider aria-label="显示比例" defaultValue="64" />
      <Icon w={8} h={12}>
        <path d="M0 6h8M4 2v8" stroke="#fff" strokeWidth="2" />
      </Icon>
      <ZoomLevel>164%</ZoomLevel>
      <Icon w={28} h={14}>
        <path d="M.5 1.5h12v11H.5zM6.5 3v2M6.5 9v2M2 7h3M8 7h3" stroke="#fff" />
      </Icon>
      <Icon w={13} h={14}>
        <path d="M5.5 8V2.5h7v7H7M.5 5.5h3M.5 5v7.500h6V8.500H.5" stroke="#fff" />
      </Icon>
    </StatusRight>
  </StatusBar>
);

const App = () => (
  <>
    <GlobalStyle />
    <Window>
      <TopBar />
      <Tabs />
      <Ribbon />
      <Body>
        <Shapes />
        <DrawingArea />
        <FormatPane />
      </Body>
      <Status />
      <TaskStrip />
      <SnapDialog />
      <Markup width="700" height="400" fill="none" aria-hidden="true">
        <path d="M344 223L402 153l-3-3 22-9-8 24-3-3-65 61z" fill="#ff2014" />
        <rect x="515.5" y="309.5" width="85" height="29" rx="2" stroke="#ff2014" strokeWidth="3" />
      </Markup>
      <MarkupText>不勾选</MarkupText>
      <Lyrics>
        <LyricLine>Look into the sun as the new days rise</LyricLine>
        <LyricLine $small>张开你的眼睛</LyricLine>
      </Lyrics>
      <BlogMark>https://blog.csdn.net/m0_37568452</BlogMark>
      <SiteMark>
        <svg width="38" height="44" aria-hidden="true">
          <path d="M19 1l18 10v21L19 43 1 32V11z" fill="#ea5a10" />
          <path d="M10 14l12-4 6 2v18l-6 2-12-4 12 1V14l-8 2v10l-4 2z" fill="#fff" />
        </svg>
        <div>
          <SiteName>Office教程网</SiteName>
          <SiteUrl>www.office26.com</SiteUrl>
        </div>
      </SiteMark>
    </Window>
  </>
);

export default App;
